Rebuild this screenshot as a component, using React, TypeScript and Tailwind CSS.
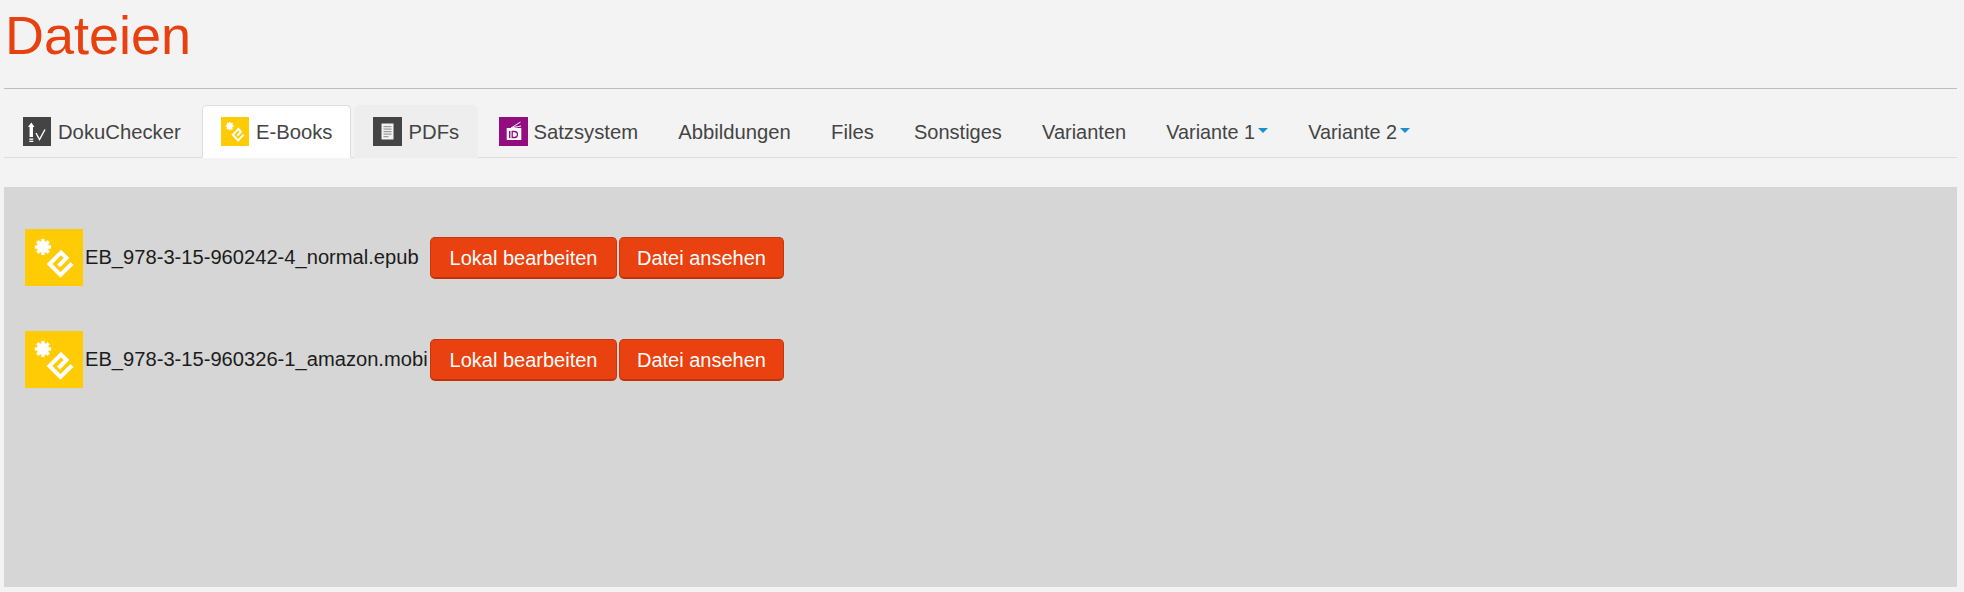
const base = '[font-family:"Liberation_Sans",Arial,sans-serif]';

function Flake({ cx, cy, r }: { cx: number; cy: number; r: number }) {
  const teeth = [0, 45, 90, 135];
  return (
    <g fill="#fff">
      <circle cx={cx} cy={cy} r={r} />
      {teeth.map((a) => (
        <rect key={a} x={cx - r * 0.28} y={cy - r * 1.35} width={r * 0.56} height={r * 2.7} transform={`rotate(${a} ${cx} ${cy})`} />
      ))}
    </g>
  );
}

function EbookIcon({ big }: { big?: boolean }) {
  return (
    <svg viewBox="0 0 58 57" className={big ? "w-[58px] h-[57px] shrink-0" : "w-[28px] h-[29px] shrink-0"} preserveAspectRatio="none">
      <rect width="58" height="57" fill="#ffcb05" />
      <Flake cx={18} cy={18} r={6} />
      <path d="M47 34.5 L35.5 46 L24.5 35 L36 23.5 L41.5 29 L33.5 37" fill="none" stroke="#fff" strokeWidth="4" />
    </svg>
  );
}

function DokuIcon() {
  return (
    <svg viewBox="0 0 28 29" className="w-[28px] h-[29px] shrink-0">
      <rect width="28" height="29" fill="#444" />
      <path d="M8.3 5.5 L11.5 10 L10 10 L10 20 L6.6 20 L6.6 10 L5 10 Z" fill="#fff" />
      <rect x="6.3" y="21.5" width="4" height="1.3" fill="#fff" />
      <rect x="6.3" y="23.7" width="4" height="1.3" fill="#fff" />
      <path d="M13 16 L16.5 22.5 L22 12.5" fill="none" stroke="#fff" strokeWidth="1.4" />
    </svg>
  );
}

function PdfIcon() {
  return (
    <svg viewBox="0 0 29 29" className="w-[29px] h-[29px] shrink-0">
      <rect width="29" height="29" fill="#444" />
      <rect x="8.5" y="6.5" width="12" height="16" fill="#f2f2f2" />
      {[9, 11.5, 14, 16.5, 19].map((y, i) => (
        <rect key={y} x="10.5" y={y} width={i === 4 ? 5 : 8} height="1.2" fill="#999" />
      ))}
    </svg>
  );
}

function SatzIcon() {
  return (
    <svg viewBox="0 0 29 29" className="w-[29px] h-[29px] shrink-0">
      <rect width="29" height="29" fill="#930d80" />
      <rect x="7.7" y="11" width="14.6" height="12" fill="#fff" />
      <path d="M12 11 L21.5 5 M12 11 L22 9" stroke="#fff" strokeWidth="1" fill="none" />
      <rect x="10" y="14" width="1.4" height="7" fill="#930d80" />
      <path d="M13.2 14.5 h2.3 a3 3 0 0 1 0 6 h-2.3 Z" fill="none" stroke="#930d80" strokeWidth="1.3" />
    </svg>
  );
}

function Caret() {
  return <span className="ml-[3px] mt-[-3px] w-0 h-0 border-x-[5.5px] border-x-transparent border-t-[5px] border-t-[#1b8fd0]" />;
}

type Tab = { label: string; icon?: React.ReactNode; gap?: string; caret?: boolean; size?: string; state?: "active" | "hover" };

const tabs: Tab[] = [
  { label: "DokuChecker", icon: <DokuIcon />, gap: "w-[7px]" },
  { label: "E-Books", icon: <EbookIcon />, gap: "w-[7px]", state: "active" },
  { label: "PDFs", icon: <PdfIcon />, gap: "w-[7px]", state: "hover" },
  { label: "Satzsystem", icon: <SatzIcon />, gap: "w-[5px]" },
  { label: "Abbildungen" },
  { label: "Files" },
  { label: "Sonstiges", size: "text-[20px]" },
  { label: "Varianten", size: "text-[20px]" },
  { label: "Variante 1", caret: true, size: "text-[19.8px]" },
  { label: "Variante 2", caret: true, size: "text-[19.8px]" },
];

function TabItem({ t }: { t: Tab }) {
  const cls =
    t.state === "active"
      ? "bg-white border border-[#dddddd] border-b-white rounded-t-[5px]"
      : t.state === "hover"
        ? "bg-[#eeeeee] border border-transparent rounded-t-[5px]"
        : "border border-transparent";
  return (
    <div className={`flex items-center mr-[2.2px] px-[18px] mb-[-1px] h-[53px] ${cls}`}>
      {t.icon}
      {t.gap && <span className={t.gap} />}
      <span className={`text-[#444444] ${t.size ?? "text-[20.25px]"} leading-[28px] mt-[1px] whitespace-nowrap`}>{t.label}</span>
      {t.caret && <Caret />}
    </div>
  );
}

function Btn({ width, children }: { width: string; children: React.ReactNode }) {
  return (
    <button className={`${width} h-[42px] mt-[1px] text-[20px] leading-[28px] text-white bg-[#e9410f] border border-[#c8370c] border-b-2 border-b-[#bf330b] rounded-[5px] whitespace-nowrap`}>
      {children}
    </button>
  );
}

function Row({ name }: { name: string }) {
  return (
    <div className="flex items-center h-[57px]">
      <EbookIcon big />
      <span className="ml-[2px] w-[345px] text-[20.15px] text-[#1c1c1c] whitespace-nowrap">{name}</span>
      <div className="flex gap-[2px]">
        <Btn width="w-[187px]">Lokal bearbeiten</Btn>
        <Btn width="w-[165px]">Datei ansehen</Btn>
      </div>
    </div>
  );
}

export default function App() {
  return (
    <div className={`${base} bg-[#f3f3f3] w-[1964px] h-[592px] overflow-hidden px-[4px]`}>
      <div className="w-[1953px]">
        <h1 className="text-[54px] leading-[62px] text-[#e8400f] font-normal pt-[4px] pl-[1px] h-[88px]">Dateien</h1>
        <div className="h-[1px] bg-[#bdbdbd]" />
        <div className="flex h-[69px] items-end border-b border-[#dddddd]">
          {tabs.map((t) => (
            <TabItem key={t.label} t={t} />
          ))}
        </div>
        <div className="mt-[29px] h-[400px] bg-[#d6d6d6] pl-[21px] pt-[42px] flex flex-col gap-[45px]">
          <Row name="EB_978-3-15-960242-4_normal.epub" />
          <Row name="EB_978-3-15-960326-1_amazon.mobi" />
        </div>
      </div>
    </div>
  );
}
